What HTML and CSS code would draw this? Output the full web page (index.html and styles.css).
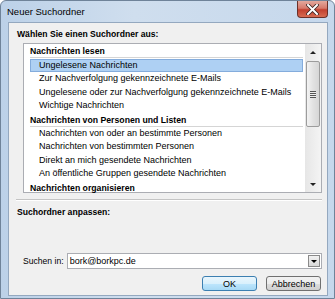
FILE: index.html
```html
<!DOCTYPE html>
<html lang="de">
<head>
  <meta charset="UTF-8">
  <title>Neuer Suchordner</title>
  <link rel="stylesheet" href="styles.css">
</head>
<body>
  <div class="window">
    <div class="titlebar">
      <span class="title">Neuer Suchordner</span>
      <div class="close">
        <svg width="13" height="11" viewBox="0 0 13 11">
          <path d="M2 1 L11 10 M11 1 L2 10" stroke="#3b2320" stroke-width="3.6" stroke-linecap="square"/>
          <path d="M2 1 L11 10 M11 1 L2 10" stroke="#ffffff" stroke-width="2" stroke-linecap="square"/>
        </svg>
      </div>
    </div>

    <div class="client">
      <div class="label">Wählen Sie einen Suchordner aus:</div>

      <div class="listbox">
        <div class="list">
          <div class="group">Nachrichten lesen</div>
          <div class="item selected">Ungelesene Nachrichten</div>
          <div class="item">Zur Nachverfolgung gekennzeichnete E-Mails</div>
          <div class="item">Ungelesene oder zur Nachverfolgung gekennzeichnete E-Mails</div>
          <div class="item">Wichtige Nachrichten</div>
          <div class="group">Nachrichten von Personen und Listen</div>
          <div class="item">Nachrichten von oder an bestimmte Personen</div>
          <div class="item">Nachrichten von bestimmten Personen</div>
          <div class="item">Direkt an mich gesendete Nachrichten</div>
          <div class="item">An öffentliche Gruppen gesendete Nachrichten</div>
          <div class="group last">Nachrichten organisieren</div>
        </div>
        <div class="scrollbar">
          <div class="arrow up"></div>
          <div class="track">
            <div class="thumb"><span class="grip"></span></div>
          </div>
          <div class="arrow down"></div>
        </div>
      </div>

      <div class="separator"></div>
      <div class="label">Suchordner anpassen:</div>
      <div class="spacer"></div>

      <div class="search-row">
        <span class="search-label">Suchen in:</span>
        <div class="combo">
          <span class="combo-text">bork@borkpc.de</span>
          <span class="drop"></span>
        </div>
      </div>

      <div class="buttons">
        <button class="btn default">OK</button>
        <button class="btn">Abbrechen</button>
      </div>
    </div>
  </div>
</body>
</html>
```

FILE: styles.css
```css
body {
  margin: 0;
  font-family: "Liberation Sans", Arial, sans-serif;
  font-size: 9px;
  color: #000;
  background: #fff;
}

.window {
  width: 335px;
  height: 299px;
  box-sizing: border-box;
  display: flex;
  flex-direction: column;
  background: linear-gradient(90deg, #bcd1e8, #cfdeee 40%, #c6d8ec);
  border: 1px solid #6f8399;
  border-radius: 6px 6px 0 0;
}

.titlebar {
  height: 21px;
  display: flex;
  align-items: flex-start;
  justify-content: space-between;
  padding-left: 6px;
}

.title {
  font-size: 9.5px;
  line-height: 21px;
}

.close {
  width: 31px;
  height: 17px;
  margin-right: 6px;
  box-sizing: border-box;
  border: 1px solid #6b3029;
  border-top: none;
  border-radius: 0 0 4px 4px;
  background: linear-gradient(#e3a99d, #d7796b 45%, #c2402f 55%, #d76c52);
  display: flex;
  align-items: center;
  justify-content: center;
}

.client {
  flex-grow: 1;
  display: flex;
  flex-direction: column;
  margin: 0 6px 2px 7px;
  padding: 5px 5px 4px 8px;
  background: #f0f0f0;
  border: 1px solid #94a8bf;
}

.label {
  font-weight: bold;
  font-size: 8.6px;
  line-height: 12px;
}

.listbox {
  display: flex;
  height: 150px;
  margin: 3px 0 0 6px;
  box-sizing: border-box;
  border: 1px solid #abadb3;
  background: #fff;
}

.list {
  flex-grow: 1;
  padding: 0 2px 0 6px;
}

.group {
  height: 13px;
  line-height: 14px;
  font-weight: bold;
  font-size: 8.7px;
  border-bottom: 1px solid #d5d5d5;
}

.group.last {
  border-bottom: none;
}

.item {
  height: 13.5px;
  line-height: 13.5px;
  padding-left: 9px;
  box-sizing: border-box;
  white-space: nowrap;
}

.item.selected {
  background: #aed0f3;
  border: 1px solid #84acdc;
  line-height: 11.5px;
  padding-left: 8px;
  margin-top: 0.5px;
}

.scrollbar {
  width: 16px;
  display: flex;
  flex-direction: column;
  background: linear-gradient(90deg, #e6e6e6, #f4f4f4);
}

.arrow {
  height: 16px;
  display: flex;
  align-items: center;
  justify-content: center;
}

.arrow::after {
  content: "";
  border-left: 3px solid transparent;
  border-right: 3px solid transparent;
}

.arrow.up::after {
  border-bottom: 3px solid #222;
}

.arrow.down::after {
  border-top: 3px solid #222;
}

.track {
  flex-grow: 1;
  padding-top: 1px;
}

.thumb {
  height: 66px;
  margin: 0 1px;
  box-sizing: border-box;
  border: 1px solid #9c9c9c;
  border-radius: 2px;
  background: linear-gradient(90deg, #f3f3f3, #e2e2e2 50%, #d6d6d6);
  display: flex;
  align-items: center;
  justify-content: center;
}

.grip {
  width: 6px;
  height: 7px;
  background: repeating-linear-gradient(#555 0 1px, #eee 1px 2px);
}

.separator {
  height: 2px;
  margin: 6px 0 0 -1px;
  border-top: 1px solid #c4c4c4;
  border-bottom: 1px solid #fff;
  box-sizing: border-box;
}

.separator + .label {
  margin-top: 5px;
}

.spacer {
  flex-grow: 1;
}

.search-row {
  display: flex;
  align-items: center;
  margin-left: 6px;
}

.search-label {
  flex-shrink: 0;
  white-space: nowrap;
  font-size: 8.6px;
  margin-right: 3px;
}

.combo {
  flex-grow: 1;
  height: 16px;
  box-sizing: border-box;
  border: 1px solid #abadb3;
  background: #fff;
  display: flex;
  align-items: center;
  justify-content: space-between;
  padding: 0 1px 0 2px;
}

.drop {
  width: 12px;
  height: 12px;
  box-sizing: border-box;
  border: 1px solid #8a8a8a;
  background: linear-gradient(#f2f2f2, #d8d8d8);
  display: flex;
  align-items: center;
  justify-content: center;
}

.drop::after {
  content: "";
  border-left: 3px solid transparent;
  border-right: 3px solid transparent;
  border-top: 3px solid #000;
}

.buttons {
  display: flex;
  justify-content: flex-end;
  gap: 9px;
  margin-top: 7px;
  padding-right: 1px;
}

.btn {
  width: 55px;
  height: 15px;
  padding: 0;
  font-family: inherit;
  font-size: 9px;
  color: #000;
  border: 1px solid #707070;
  border-radius: 3px;
  background: linear-gradient(#f2f2f2, #ebebeb 50%, #dddddd 50%, #cfcfcf);
}

.btn.default {
  border-color: #3c7fb1;
  background: linear-gradient(#eaf6fd, #d9f0fc 50%, #bee6fd 50%, #a7d9f5);
}
```
